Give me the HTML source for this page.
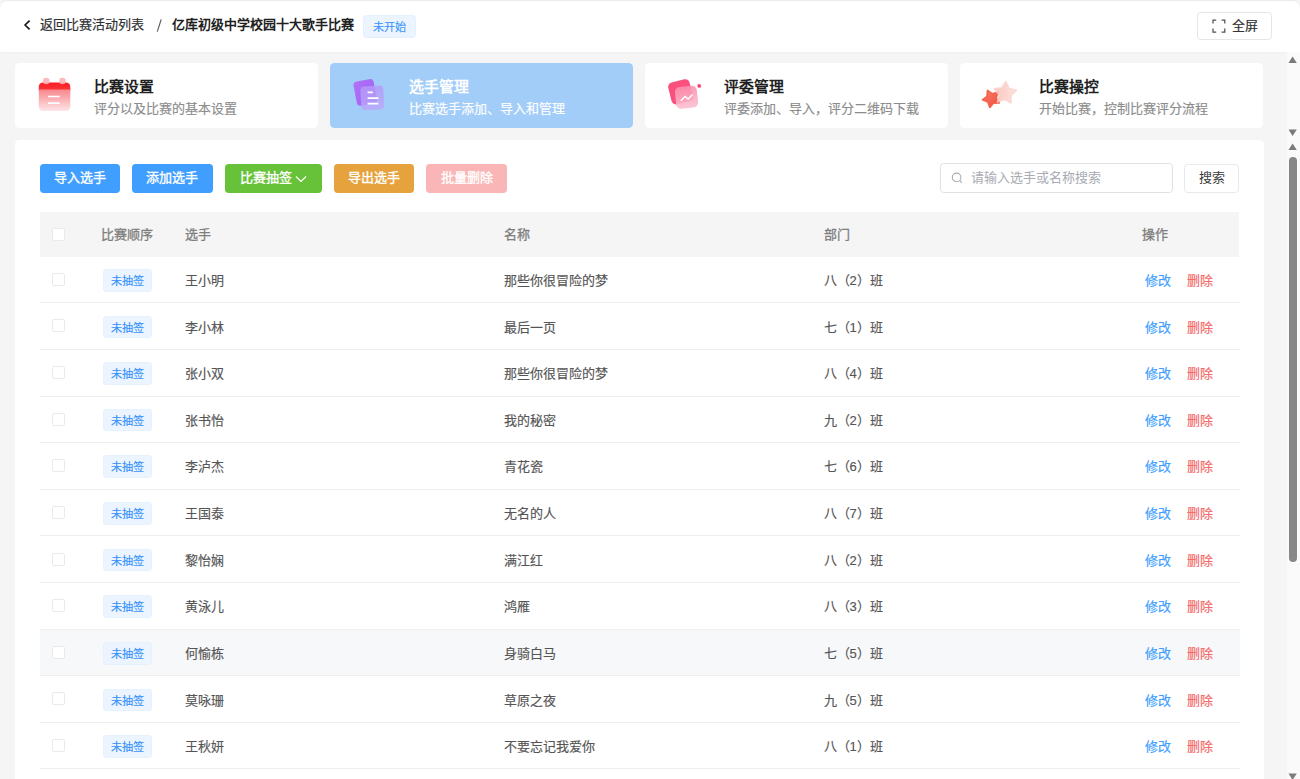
<!DOCTYPE html>
<html lang="zh-CN"><head><meta charset="utf-8"><title>选手管理</title>
<style>
*{box-sizing:border-box;margin:0;padding:0}
html,body{width:1300px;height:779px;overflow:hidden}
body{font-family:"Liberation Sans",sans-serif;background:#f5f5f5;position:relative;color:#333;font-size:13px}
.a{position:absolute;white-space:nowrap}
.hdr{position:absolute;left:0;top:0;width:1300px;height:51.5px;background:#fff;box-shadow:inset 0 1px 0 #ebebeb,0 1px 3px rgba(0,0,0,.025);border-radius:7px 7px 0 0}
html{background:#f0f0f0}
.t13{font-size:13px;line-height:20px}
.back{left:40.3px;top:14.9px;color:#303133;-webkit-text-stroke:.2px #303133}
.sep{left:156.5px;top:14.9px;color:#606266}
.ttl{left:172px;top:14.9px;font-weight:700;color:#1f1f1f}
.tag0{left:363px;top:15.3px;width:52.7px;height:22.4px;background:#ecf5ff;border:1px solid #e3f0fe;border-radius:3.7px;color:#3d95fb;font-size:11.14px;line-height:22px;text-align:center;-webkit-text-stroke:.15px #3d95fb}
.fs{left:1196.6px;top:11.6px;width:75.1px;height:28.7px;border:1px solid #e6e6e6;border-radius:3.7px;background:#fff}
.fs span{position:absolute;left:34px;top:3.6px;font-size:13px;line-height:20px;color:#333;-webkit-text-stroke:.2px #333}
.fs svg{position:absolute;left:14.6px;top:6.6px}
.sb{position:absolute;left:1286.7px;width:13.3px;background:#fafafa}
.card{position:absolute;top:63px;width:303.3px;height:64.6px;background:#fff;border-radius:4.6px}
.card h3{position:absolute;left:79.2px;top:14px;font-size:14.86px;line-height:20px;font-weight:700;color:#1f1f1f;white-space:nowrap}
.card p{position:absolute;left:79px;top:36.15px;font-size:13px;line-height:20px;color:#8c8c8c;white-space:nowrap;-webkit-text-stroke:.15px #8c8c8c}
.card.sel p{-webkit-text-stroke:.15px #fff}
.card.sel{background:#a3cdf9}
.card.sel h3,.card.sel p{color:#fff}
.card svg{position:absolute}
.panel{position:absolute;left:15px;top:139.8px;width:1248.5px;height:700px;background:#fff;border-radius:4.6px}
.btn{position:absolute;top:163.8px;height:29.2px;border-radius:3.7px;color:#fff;font-size:13px;line-height:27.6px;font-weight:400;text-align:center;-webkit-text-stroke:.35px #fff}
.srch{left:939.5px;top:163.3px;width:233.1px;height:29.7px;border:1px solid #dfe1e6;border-radius:3.7px;background:#fff}
.srch span{position:absolute;left:30.6px;top:3.9px;font-size:13px;line-height:20px;color:#a8abb2}
.srch svg{position:absolute;left:10.5px;top:8.2px}
.sbtn{left:1184.3px;top:163.8px;width:54.6px;height:29.2px;border:1px solid #e8e9ec;border-radius:3.7px;background:#fff;font-size:13px;line-height:25.8px;text-align:center;padding-left:1.4px;color:#3c3c3c}
.thead{position:absolute;left:40px;top:212px;width:1199px;height:44.68px;background:#f5f5f5}
.thead span{position:absolute;top:13.4px;font-size:13px;line-height:20px;font-weight:400;color:#7e7e7e;-webkit-text-stroke:.3px #7e7e7e}
.cb{position:absolute;left:12.3px;width:13px;height:13px;border:1px solid #eaeaea;border-radius:2px;background:#fff}
.rows{position:absolute;left:0;top:0}
.row{position:absolute;left:40px;width:1199.6px;height:46.62px;border-bottom:1px solid #eeeeee;background:#fff}
.row.hov{background:#f7f8fa}
.row .cb{top:16.2px}
.row span{position:absolute;top:14.3px;font-size:13px;line-height:20px;color:#555;-webkit-text-stroke:.15px #555}
.tg{position:absolute;left:63.1px;top:12.3px;width:49.6px;height:22.6px;background:#ecf5ff;border:1px solid #e6f1fe;border-radius:3.2px;color:#3a93fa;font-size:11.14px;line-height:22.1px;width:49.1px;text-align:center;font-weight:400;-webkit-text-stroke:.18px #3a93fa}
.c1{left:144.7px}.c2{left:464.2px}.c3{left:783.6px}
.row .ed{left:1104.8px;color:#409eff;-webkit-text-stroke:.2px #409eff}.row .dl{left:1146.8px;color:#f56c6c;-webkit-text-stroke:.2px #f56c6c}

</style></head><body>
<div class="hdr">
<svg class="a" style="left:22px;top:18px" width="10" height="14" viewBox="0 0 10 14"><path d="M7.6 2.6 L3.1 7 L7.6 11.4" fill="none" stroke="#1a1a1a" stroke-width="1.65"/></svg>
<div class="a t13 back">返回比赛活动列表</div>
<svg class="a" style="left:150px;top:15px" width="16" height="20"><path d="M11.2 4.4 L7.3 16.6" stroke="#5a5a5a" stroke-width="1.15"/></svg>
<div class="a t13 ttl">亿库初级中学校园十大歌手比赛</div>
<div class="a tag0">未开始</div>
<div class="a fs"><svg width="14" height="14" viewBox="0 0 14 14"><path d="M1 4.4V1H4.2M9.6 1H12.8V4.4M12.8 9.6V13H9.6M4.2 13H1V9.6" fill="none" stroke="#505050" stroke-width="1.25"/></svg><span>全屏</span></div>
</div>
<div class="sb" style="top:51.5px;height:88.3px">
<svg class="a" style="left:1.6px;top:4.3px" width="10" height="8"><path d="M0.5 7 L4.6 0.5 L8.8 7Z" fill="#7b7b7b"/></svg>
<svg class="a" style="left:1.6px;top:77.5px" width="10" height="8"><path d="M0.5 0.5 L4.6 7 L8.8 0.5Z" fill="#7b7b7b"/></svg>
</div>
<div class="sb" style="top:139.8px;height:640px">
<svg class="a" style="left:1.6px;top:3.5px" width="10" height="8"><path d="M0.5 7 L4.6 0.5 L8.8 7Z" fill="#7b7b7b"/></svg>
<div class="a" style="left:2.6px;top:16.9px;width:7.7px;height:405px;border-radius:4px;background:#878787"></div>
<svg class="a" style="left:1.6px;top:633px" width="10" height="8"><path d="M0.5 0.5 L4.6 7 L8.8 0.5Z" fill="#7b7b7b"/></svg>
</div>

<div class="card" style="left:15px">
<svg style="left:23px;top:13px" width="36" height="38" viewBox="0 0 36 38">
<defs><linearGradient id="g1" x1="0" y1="0" x2="0" y2="1"><stop offset="0" stop-color="#f8868c"/><stop offset="1" stop-color="#fde5e7"/></linearGradient>
<linearGradient id="g1b" x1="0" y1="0" x2="0" y2="1"><stop offset="0" stop-color="#fb1d24"/><stop offset="1" stop-color="#f9353b"/></linearGradient></defs>
<path d="M0.8 11 Q0.8 6.4 5.4 6.4 H27.7 Q32.3 6.4 32.3 11 V15 H0.8Z" fill="url(#g1b)"/>
<path d="M0.8 13.5 H32.3 V30 Q32.3 35 27.3 35 H5.8 Q0.8 35 0.8 30Z" fill="url(#g1)"/>
<circle cx="8.2" cy="5" r="3.3" fill="#fab2b6" opacity=".9"/><circle cx="24.5" cy="5" r="3.3" fill="#fab2b6" opacity=".9"/>
<path d="M10 20.5H21.7M10 27.2H21.7" stroke="#fff" stroke-width="1.7"/>
</svg>
<h3>比赛设置</h3><p>评分以及比赛的基本设置</p></div>

<div class="card sel" style="left:330px">
<svg style="left:20px;top:13px" width="38" height="38" viewBox="0 0 38 38">
<defs><linearGradient id="g2" x1="0" y1="0" x2="1" y2="1"><stop offset="0" stop-color="#b273f9"/><stop offset="1" stop-color="#9c5ff3"/></linearGradient>
<linearGradient id="g2b" x1="0" y1="0" x2="0" y2="1"><stop offset="0" stop-color="#b59af9"/><stop offset="1" stop-color="#b9a8fa"/></linearGradient></defs>
<rect x="5" y="4.2" width="20.5" height="24.5" rx="4" fill="url(#g2)" transform="rotate(-11 15.2 16.4)"/>
<rect x="10.8" y="10" width="23" height="24" rx="4" fill="url(#g2b)" opacity=".82" transform="rotate(-3 22 22)"/>
<path d="M17.6 16.4H22.8M17.6 22.1H28.4M17.6 27.6H28.4" stroke="#fff" stroke-width="1.8"/>
</svg>
<h3>选手管理</h3><p>比赛选手添加、导入和管理</p></div>

<div class="card" style="left:645px">
<svg style="left:20px;top:13px" width="40" height="38" viewBox="0 0 40 38">
<defs><linearGradient id="g3" x1="0" y1="0" x2="0" y2="1"><stop offset="0" stop-color="#fb8fae"/><stop offset="1" stop-color="#fcc0d1"/></linearGradient></defs>
<rect x="4.6" y="4.6" width="22" height="22.5" rx="4.5" fill="#f9507d" transform="rotate(-14 15.6 15.9)"/>
<rect x="10.5" y="10.3" width="22" height="22" rx="5" fill="url(#g3)" opacity=".9" transform="rotate(-6 21.5 21.3)"/>
<circle cx="34.2" cy="9.9" r="1.9" fill="#ff3f70"/>
<path d="M15.8 24.7 L20.1 20.5 L23.2 23 L27.5 18.4" fill="none" stroke="#fff" stroke-width="1.4"/>
</svg>
<h3>评委管理</h3><p>评委添加、导入，评分二维码下载</p></div>

<div class="card" style="left:960px">
<svg style="left:18px;top:13px" width="42" height="38" viewBox="0 0 42 38">
<defs><linearGradient id="g4" x1="0" y1="0" x2="1" y2="1"><stop offset="0" stop-color="#f7836f"/><stop offset="1" stop-color="#f24a36"/></linearGradient>
<linearGradient id="g4b" x1="0" y1="0" x2="1" y2="0"><stop offset="0" stop-color="#fbbdb3"/><stop offset="1" stop-color="#fde0db"/></linearGradient></defs>
<path d="M19.87,16.35 L18.35,21.90 L21.35,26.83 L15.59,27.09 L11.84,31.46 L9.80,26.07 L4.49,23.85 L8.99,20.25 L9.45,14.51 L14.27,17.68Z" fill="url(#g4)" stroke="#f4624d" stroke-width="1.6" stroke-linejoin="round"/>
<path d="M27.81,5.63 L31.05,12.37 L38.26,14.39 L32.84,19.56 L33.15,27.04 L26.56,23.48 L19.54,26.09 L20.89,18.72 L16.24,12.85 L23.66,11.86Z" fill="url(#g4b)" opacity=".88" stroke="#fcd0c9" stroke-opacity=".9" stroke-width="1.6" stroke-linejoin="round"/>
</svg>
<h3>比赛操控</h3><p>开始比赛，控制比赛评分流程</p></div>

<div class="panel"></div>
<div class="btn" style="left:39.6px;width:80.4px;background:#409eff">导入选手</div>
<div class="btn" style="left:132.1px;width:80.8px;background:#409eff">添加选手</div>
<div class="btn" style="left:225px;width:97px;background:#67c23a;text-align:left;padding-left:14.5px">比赛抽签</div>
<svg class="a" style="left:295px;top:174px" width="12" height="10"><path d="M1 2.5 L6 7.5 L11 2.5" fill="none" stroke="#fff" stroke-width="1.2"/></svg>
<div class="btn" style="left:334.2px;width:80.3px;background:#e6a23c">导出选手</div>
<div class="btn" style="left:426.3px;width:81.1px;background:#fab6b6">批量删除</div>
<div class="a srch"><svg width="14" height="14" viewBox="0 0 14 14"><circle cx="5.6" cy="5.4" r="4.3" fill="none" stroke="#a8abb2" stroke-width="1.1"/><path d="M8.8 8.6 L10.8 10.6" stroke="#a8abb2" stroke-width="1.2"/></svg><span>请输入选手或名称搜索</span></div>
<div class="a sbtn">搜索</div>
<div class="thead"><i class="cb" style="top:16px"></i><span style="left:61.3px">比赛顺序</span><span style="left:144.7px">选手</span><span style="left:464.2px">名称</span><span style="left:783.6px">部门</span><span style="left:1102.2px">操作</span></div>

<div class="rows">
<div class="row" style="top:256.68px"><i class="cb"></i><b class="tg">未抽签</b><span class="c1">王小明</span><span class="c2">那些你很冒险的梦</span><span class="c3">八（2）班</span><span class="ed">修改</span><span class="dl">删除</span></div>
<div class="row" style="top:303.30px"><i class="cb"></i><b class="tg">未抽签</b><span class="c1">李小林</span><span class="c2">最后一页</span><span class="c3">七（1）班</span><span class="ed">修改</span><span class="dl">删除</span></div>
<div class="row" style="top:349.92px"><i class="cb"></i><b class="tg">未抽签</b><span class="c1">张小双</span><span class="c2">那些你很冒险的梦</span><span class="c3">八（4）班</span><span class="ed">修改</span><span class="dl">删除</span></div>
<div class="row" style="top:396.54px"><i class="cb"></i><b class="tg">未抽签</b><span class="c1">张书怡</span><span class="c2">我的秘密</span><span class="c3">九（2）班</span><span class="ed">修改</span><span class="dl">删除</span></div>
<div class="row" style="top:443.16px"><i class="cb"></i><b class="tg">未抽签</b><span class="c1">李泸杰</span><span class="c2">青花瓷</span><span class="c3">七（6）班</span><span class="ed">修改</span><span class="dl">删除</span></div>
<div class="row" style="top:489.78px"><i class="cb"></i><b class="tg">未抽签</b><span class="c1">王国泰</span><span class="c2">无名的人</span><span class="c3">八（7）班</span><span class="ed">修改</span><span class="dl">删除</span></div>
<div class="row" style="top:536.40px"><i class="cb"></i><b class="tg">未抽签</b><span class="c1">黎怡娴</span><span class="c2">满江红</span><span class="c3">八（2）班</span><span class="ed">修改</span><span class="dl">删除</span></div>
<div class="row" style="top:583.02px"><i class="cb"></i><b class="tg">未抽签</b><span class="c1">黄泳儿</span><span class="c2">鸿雁</span><span class="c3">八（3）班</span><span class="ed">修改</span><span class="dl">删除</span></div>
<div class="row hov" style="top:629.64px"><i class="cb"></i><b class="tg">未抽签</b><span class="c1">何愉栋</span><span class="c2">身骑白马</span><span class="c3">七（5）班</span><span class="ed">修改</span><span class="dl">删除</span></div>
<div class="row" style="top:676.26px"><i class="cb"></i><b class="tg">未抽签</b><span class="c1">莫咏珊</span><span class="c2">草原之夜</span><span class="c3">九（5）班</span><span class="ed">修改</span><span class="dl">删除</span></div>
<div class="row" style="top:722.88px"><i class="cb"></i><b class="tg">未抽签</b><span class="c1">王秋妍</span><span class="c2">不要忘记我爱你</span><span class="c3">八（1）班</span><span class="ed">修改</span><span class="dl">删除</span></div>
</div>
</body></html>
